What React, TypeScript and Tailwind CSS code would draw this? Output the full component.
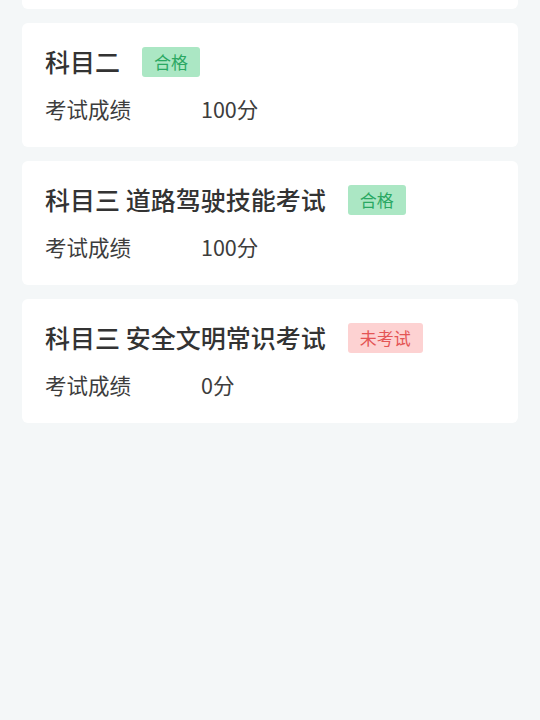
const font = { fontFamily: '"Noto Sans CJK SC", "Noto Sans", sans-serif' }

type Item = { title: string; status: 'pass' | 'none'; score: string }

const items: Item[] = [
  { title: '科目二', status: 'pass', score: '100分' },
  { title: '科目三 道路驾驶技能考试', status: 'pass', score: '100分' },
  { title: '科目三 安全文明常识考试', status: 'none', score: '0分' },
]

function Badge({ status }: { status: Item['status'] }) {
  if (status === 'pass') {
    return (
      <span className="h-[30px] px-3 rounded-[3px] bg-[#abe7c4] text-[#2aa862] text-[17px] leading-[30px]">
        合格
      </span>
    )
  }
  return (
    <span className="h-[30px] px-3 rounded-[3px] bg-[#fdd2d2] text-[#e45555] text-[17px] leading-[30px]">
      未考试
    </span>
  )
}

function ScoreCard({ item }: { item: Item }) {
  return (
    <div className="bg-white rounded-md h-[124px] pl-[23px] pt-6">
      <div className="flex items-center gap-[22px] h-[30px]">
        <span className="text-[25px] font-medium text-[#333333] leading-[30px] -translate-y-px">{item.title}</span>
        <Badge status={item.status} />
      </div>
      <div className="flex items-center h-[30px] mt-[17px] text-[21.5px] text-[#3d3d3d]">
        <span className="w-[156px]">考试成绩</span>
        <span>{item.score}</span>
      </div>
    </div>
  )
}

export default function App() {
  return (
    <div className="min-h-[720px] bg-[#f4f7f8] px-[22px]" style={font}>
      {/* 위쪽에 잘린 카드 */}
      <div className="h-[9px] bg-white rounded-b-md" />
      <div className="flex flex-col gap-[14px] mt-[14px]">
        {items.map((item, i) => (
          <ScoreCard key={i} item={item} />
        ))}
      </div>
    </div>
  )
}
